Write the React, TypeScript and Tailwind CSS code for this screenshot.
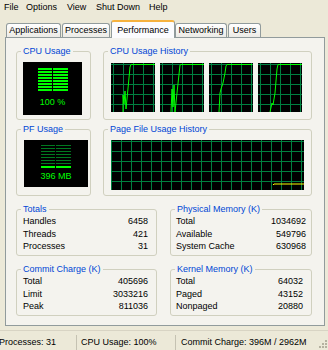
import React from 'react'

type Row = { label: string; value: string }

const totals: Row[] = [
    { label: 'Handles', value: '6458' },
    { label: 'Threads', value: '421' },
    { label: 'Processes', value: '31' },
]

const physical: Row[] = [
    { label: 'Total', value: '1034692' },
    { label: 'Available', value: '549796' },
    { label: 'System Cache', value: '630968' },
]

const commit: Row[] = [
    { label: 'Total', value: '405696' },
    { label: 'Limit', value: '3033216' },
    { label: 'Peak', value: '811036' },
]

const kernel: Row[] = [
    { label: 'Total', value: '64032' },
    { label: 'Paged', value: '43152' },
    { label: 'Nonpaged', value: '20880' },
]

// green traces for the four cpu graphs
const cpuTraces = [
    '12,49 12,32 13,41 14,28 15,46 16,36 19,4 20,1.5 44,1.5',
    '11,49 12,26 13,44 14,22 15,49 17,30 20,2 21,1.5 45,1.5',
    '10,49 11,30 12,26 14,20 16,10 17,3 18,1.5 43,1.5',
    '12,49 14,40 15,42 17,30 18,18 19,6 20,1.5 44,1.5',
]

function Grid({ w, h, xoff, yoff, children }: { w: number; h: number; xoff: number; yoff: number; children?: React.ReactNode }) {
    const cols = Math.ceil(w / 10) + 1
    const rows = Math.ceil(h / 10) + 1
    return (
        <svg width={w} height={h} className="block bg-black shrink-0">
            <g stroke="#008040" strokeWidth="1" shapeRendering="crispEdges">
                {Array.from({ length: cols }, (_, i) => (
                    <line key={'v' + i} x1={xoff + i * 10 + 0.5} y1={0} x2={xoff + i * 10 + 0.5} y2={h} />
                ))}
                {Array.from({ length: rows }, (_, i) => (
                    <line key={'h' + i} x1={0} y1={yoff + i * 10 + 0.5} x2={w} y2={yoff + i * 10 + 0.5} />
                ))}
            </g>
            {children}
        </svg>
    )
}

function Group({ title, className, children }: { title: string; className?: string; children?: React.ReactNode }) {
    return (
        <fieldset className={`border border-[#D0D0BF] rounded-[3px] min-w-0 ${className ?? ''}`}>
            <legend className="ml-[4px] px-[2px] text-[#0046D5] leading-[11px]">{title}</legend>
            {children}
        </fieldset>
    )
}

function StatGroup({ title, rows, pl, pr }: { title: string; rows: Row[]; pl: string; pr: string }) {
    return (
        <Group title={title} className="h-[52px]">
            <div className={`flex flex-col ${pl} ${pr}`}>
                {rows.map((r) => (
                    <div key={r.label} className="flex justify-between h-[12.5px] leading-[12.5px]">
                        <span>{r.label}</span>
                        <span>{r.value}</span>
                    </div>
                ))}
            </div>
        </Group>
    )
}

function CpuMeter() {
    return (
        <div className="w-[59px] h-[53px] bg-black ml-[6px] mt-[5px] flex flex-col items-center">
            <svg width="30" height="25" className="block mt-[6px]">
                {Array.from({ length: 8 }, (_, i) => (
                    <g key={i} fill="#00FF00">
                        <rect x="0" y={i * 3} width="14" height="2" />
                        <rect x="15" y={i * 3} width="15" height="2" />
                    </g>
                ))}
            </svg>
            <div className="text-[#00FF00] leading-[11px] mt-[4px]">100 %</div>
        </div>
    )
}

function PfMeter() {
    return (
        <div className="w-[64px] h-[47px] bg-black ml-[7px] mt-[5px] flex flex-col items-center">
            <svg width="30" height="24" className="block mt-[5px]">
                {Array.from({ length: 8 }, (_, i) => (
                    <g key={i} fill={i === 7 ? '#00FF00' : '#007A20'}>
                        <rect x="0" y={i * 3} width="14" height={i === 7 ? 2 : 1} />
                        <rect x="15" y={i * 3} width="15" height={i === 7 ? 2 : 1} />
                    </g>
                ))}
            </svg>
            <div className="text-[#00FF00] leading-[11px] mt-[2px]">396 MB</div>
        </div>
    )
}

function Tab({ label, width, ml, selected }: { label: string; width: string; ml: string; selected?: boolean }) {
    if (selected) {
        return (
            <div className={`relative z-10 ${width} ${ml} h-[18px] -mb-px bg-[#FCFCFE] border border-b-0 border-[#919B9C] border-t-2 border-t-[#F6B23E] rounded-t-[3px] flex items-center justify-center`}>
                {label}
            </div>
        )
    }
    return (
        <div className={`${width} ${ml} h-[14px] bg-gradient-to-b from-white to-[#ECEBE6] border border-b-0 border-[#919B9C] rounded-t-[3px] flex items-center justify-center`}>
            {label}
        </div>
    )
}

export default function App() {
    return (
        <div className="w-[328px] h-[350px] bg-[#ECE9D8] flex flex-col overflow-hidden text-[9px] leading-[11px] text-black font-['Liberation_Sans',Arial,sans-serif]">
            <div className="h-[17px] flex items-center pl-[4px] pb-[3px]">
                <span className="w-[22px]">File</span>
                <span className="w-[41px]">Options</span>
                <span className="w-[29px]">View</span>
                <span className="w-[53px]">Shut Down</span>
                <span>Help</span>
            </div>

            <div className="h-[20px] flex items-end">
                <Tab label="Applications" width="w-[55px]" ml="ml-[6px]" />
                <Tab label="Processes" width="w-[48px]" ml="ml-[1px]" />
                <Tab label="Performance" width="w-[64px]" ml="ml-[1px]" selected />
                <Tab label="Networking" width="w-[52px]" ml="ml-0" />
                <Tab label="Users" width="w-[33px]" ml="ml-[1px]" />
            </div>

            <div className="ml-[5px] w-[320px] h-[289px] border border-[#919B9C] bg-[#F4F3EE] pt-[8px] pl-[10px] pr-[12px] flex flex-col">
                <div className="grid grid-cols-[75px_209px] gap-x-[12px] h-[74px]">
                    <Group title="CPU Usage">
                        <CpuMeter />
                    </Group>
                    <Group title="CPU Usage History">
                        <div className="flex gap-[5px] ml-[7px] mt-[6px]">
                            {cpuTraces.map((t, i) => (
                                <Grid key={i} w={44} h={49} xoff={2} yoff={1}>
                                    <polyline points={t} fill="none" stroke="#00FF00" strokeWidth="1" />
                                </Grid>
                            ))}
                        </div>
                    </Group>
                </div>

                <div className="grid grid-cols-[75px_209px] gap-x-[12px] h-[72px] mt-[4px]">
                    <Group title="PF Usage">
                        <PfMeter />
                    </Group>
                    <Group title="Page File Usage History">
                        <div className="ml-[7px] mt-[5px]">
                            <Grid w={193} h={50} xoff={0} yoff={1}>
                                <polyline points="162,45 163,44 193,44" fill="none" stroke="#FFFF00" strokeWidth="1" />
                            </Grid>
                        </div>
                    </Group>
                </div>

                <div className="grid grid-cols-[141px_142px] gap-x-[13px] mt-[8px]">
                    <StatGroup title="Totals" rows={totals} pl="pl-[6px]" pr="pr-[8px]" />
                    <StatGroup title="Physical Memory (K)" rows={physical} pl="pl-[5px]" pr="pr-[5px]" />
                </div>

                <div className="grid grid-cols-[141px_142px] gap-x-[13px] mt-[8px]">
                    <StatGroup title="Commit Charge (K)" rows={commit} pl="pl-[6px]" pr="pr-[8px]" />
                    <StatGroup title="Kernel Memory (K)" rows={kernel} pl="pl-[5px]" pr="pr-[8px]" />
                </div>
            </div>

            <div className="mt-[4px] h-[20px] flex items-center pt-[4px] border-t border-[#D8D4C4]">
                <div className="w-[78px] -ml-[1px] border-r border-[#C5C2B2] h-[16px] flex items-center">Processes: 31</div>
                <div className="w-[99px] pl-[4px] border-r border-[#C5C2B2] h-[16px] flex items-center">CPU Usage: 100%</div>
                <div className="flex-1 pl-[5px] h-[16px] flex items-center">Commit Charge: 396M / 2962M</div>
                <svg width="10" height="12" className="block mr-[1px] self-end">
                    {[
                        [8, 2], [8, 5], [5, 5], [8, 8], [5, 8], [2, 8],
                    ].map(([x, y], i) => (
                        <rect key={i} x={x} y={y} width="2" height="2" fill="#B5B1A0" />
                    ))}
                </svg>
            </div>
        </div>
    )
}
